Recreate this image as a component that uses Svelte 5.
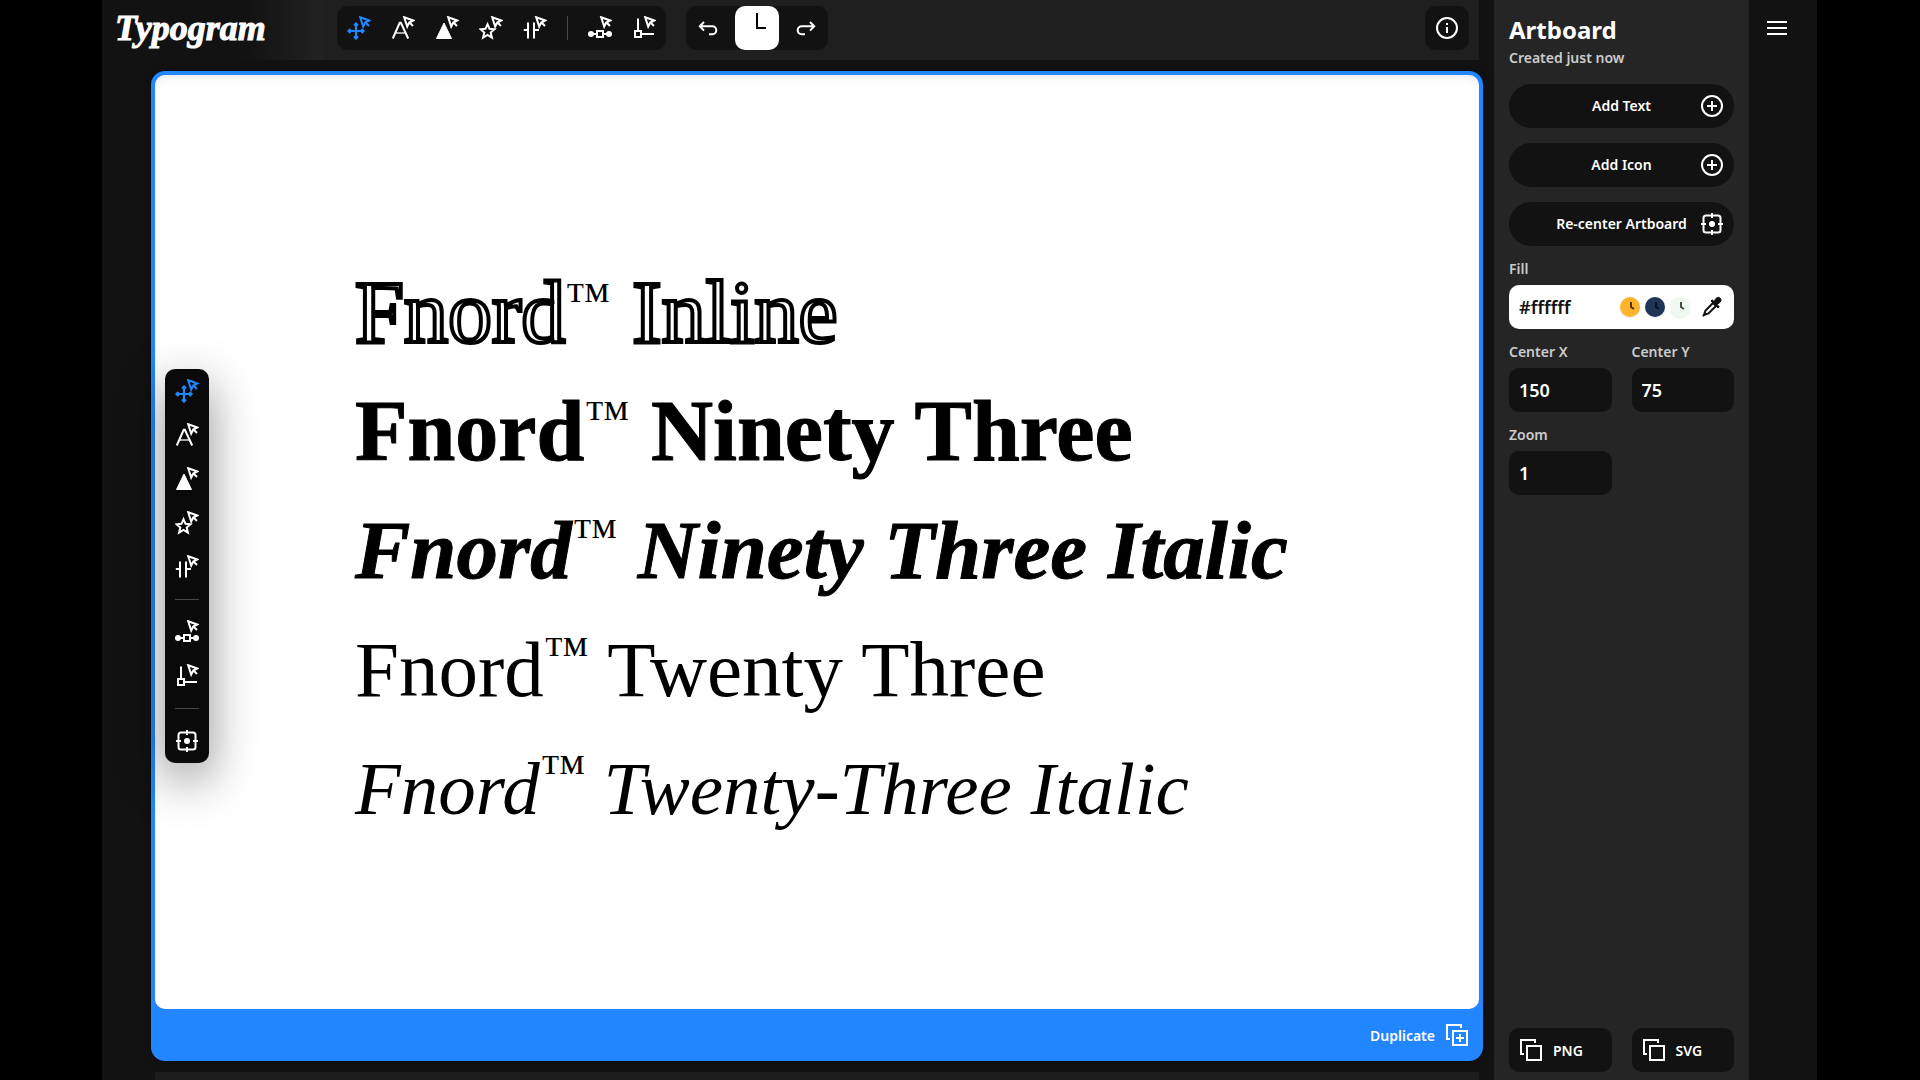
<script>
  const tools = ['move', 'text', 'shape', 'star', 'spacing'];
  const pathTools = ['bezier', 'corner'];
  const titles = {
    move: 'Move',
    text: 'Select text',
    shape: 'Select shape',
    star: 'Select icon',
    spacing: 'Letter spacing',
    bezier: 'Edit path',
    corner: 'Edit corners'
  };

  const lines = [
    { name: 'Inline', style: 'inline' },
    { name: 'Ninety Three', style: 'heavy' },
    { name: 'Ninety Three Italic', style: 'heavy-italic' },
    { name: 'Twenty Three', style: 'light' },
    { name: 'Twenty-Three Italic', style: 'light-italic' }
  ];

  const swatches = ['#ffb42c', '#1d3557', '#f0f9f0'];

  let active = $state('move');
  let fill = $state('#ffffff');
  let centerX = $state('150');
  let centerY = $state('75');
  let zoom = $state('1');

  function recenter() {
    centerX = '150';
    centerY = '75';
    zoom = '1';
  }
</script>

{#snippet icon(name)}
  <svg class="icon" viewBox="0 0 24 24" width="24" height="24" aria-hidden="true">
    {#if name === 'move'}
      <path d="M9 8v14M2 15h14M7 9.5l2-2 2 2M7 20.500l2 2 2-2M3.500 13l-2 2 2 2M14.500 13l2 2-2 2" stroke-width="2.200" />
    {:else if name === 'text'}
      <path d="M1.800 22.500 8.700 6.800h1.200l7.300 15.700" stroke-width="2" />
      <path d="M4.500 17h10" stroke-width="1.600" opacity="0.8" />
    {:else if name === 'shape'}
      <path d="M9 7 16.500 22.500H1.500z" class="solid" stroke-width="1" />
    {:else if name === 'star'}
      <path d="M8.500 8.200l2 4.600 5 .5-3.800 3.300 1.200 5-4.400-2.700-4.400 2.700 1.200-5-3.800-3.300 5-.5z" stroke-width="2" />
    {:else if name === 'spacing'}
      <path d="M5 6.500v16M11 6.500v16M.8 14h4M11.500 14H16" />
    {:else if name === 'bezier'}
      <circle cx="3" cy="18" r="3" class="solid" stroke="none" />
      <circle cx="21" cy="18" r="3" class="solid" stroke="none" />
      <path d="M4 18h5M15 18h5M9 15h6v6H9z" />
    {:else if name === 'corner'}
      <path d="M3 15h6v6H3zM6 2.500V15M9.500 18H22" />
    {:else if name === 'undo'}
      <path d="M8 6 3.800 10.300 8 14.600M4 10.300h12.300a4 4 0 0 1 0 8H13" />
    {:else if name === 'redo'}
      <path d="M16 6l4.200 4.300L16 14.600M20 10.300H7.700a4 4 0 0 0 0 8H11" />
    {:else if name === 'info'}
      <circle cx="12" cy="12" r="10" />
      <path d="M12 11v6M12 7v2" />
    {:else if name === 'plus'}
      <circle cx="12" cy="12" r="10" />
      <path d="M12 7v10M7 12h10" />
    {:else if name === 'target'}
      <rect x="3.500" y="3.500" width="17" height="17" rx="2.500" />
      <path d="M12 1v5M12 18v5M1 12h5M18 12h5" />
      <circle cx="12" cy="12" r="3" class="solid" stroke="none" />
    {:else if name === 'menu'}
      <path d="M2 6h20M2 12h20M2 18h20" />
    {:else if name === 'copy' || name === 'duplicate'}
      <path d="M5 16H2V2h14v3M8 8h14v14H8z" />
      {#if name === 'duplicate'}
        <path d="M15 11v8M11 15h8" />
      {/if}
    {:else if name === 'pipette'}
      <path d="M4 20l1.500-4.500 7.500-7.500 3 3-7.500 7.500L4 20z" />
      <path d="M3 21l2-2" />
      <path d="M11 6l7 7 1.200-1.200-2.200-2.300 3.200-2.300a2.600 2.600 0 0 0-4-4L14 6.500l-1.700-1.700z" class="solid" stroke-width="1" />
    {/if}
    {#if name in titles}
      <path d="M13.200 1.300l9 3.200-4 2-2 4zM18.500 6.500l3.500 3.500" />
    {/if}
  </svg>
{/snippet}

{#snippet toolButtons(names)}
  {#each names as name}
    <button class="tool" class:active={active === name} aria-label={titles[name]} onclick={() => (active = name)}>
      {@render icon(name)}
    </button>
  {/each}
{/snippet}

<div class="app">
  <main class="workspace">
    <header class="topbar">
      <a class="logo" href="#home">Typogram</a>
      <div class="group">
        {@render toolButtons(tools)}
        <span class="divider"></span>
        {@render toolButtons(pathTools)}
      </div>
      <div class="group history">
        <button class="tool" aria-label="Undo">{@render icon('undo')}</button>
        <button class="tool clock" aria-label="History">
          <svg viewBox="0 0 44 44" width="44" height="44" aria-hidden="true">
            <path d="M22 7v15h9" />
          </svg>
        </button>
        <button class="tool" aria-label="Redo">{@render icon('redo')}</button>
      </div>
      <div class="group info">
        <button class="tool" aria-label="Info">{@render icon('info')}</button>
      </div>
    </header>

    <div class="stage">
      <section class="artboard">
        <div class="canvas">
          {#each lines as line}
            <p class="line {line.style}">Fnord<span class="tm">™</span> {line.name}</p>
          {/each}
        </div>
        <footer class="artboard-bar">
          <button class="duplicate">Duplicate {@render icon('duplicate')}</button>
        </footer>
        <div class="floating">
          {@render toolButtons(tools)}
          <span class="divider"></span>
          {@render toolButtons(pathTools)}
          <span class="divider"></span>
          <button class="tool" aria-label="Re-center" onclick={recenter}>{@render icon('target')}</button>
        </div>
      </section>
      <div class="next-board"></div>
    </div>
  </main>

  <aside class="panel">
    <h1>Artboard</h1>
    <p class="created">Created just now</p>

    <div class="actions">
      <button class="pill"><span>Add Text</span>{@render icon('plus')}</button>
      <button class="pill"><span>Add Icon</span>{@render icon('plus')}</button>
      <button class="pill" onclick={recenter}><span>Re-center Artboard</span>{@render icon('target')}</button>
    </div>

    <div class="fields">
      <div class="field wide">
        <label for="fill">Fill</label>
        <div class="fill-box">
          <input id="fill" type="text" bind:value={fill} />
          <div class="swatches">
            {#each swatches as color}
              <button class="swatch" style="background: {color}" aria-label={color} onclick={() => (fill = color)}>
                <svg viewBox="0 0 20 20" width="20" height="20" aria-hidden="true">
                  <path d="M11 5v5l3 2" />
                </svg>
              </button>
            {/each}
          </div>
          <button class="pick" aria-label="Pick color">{@render icon('pipette')}</button>
        </div>
      </div>
      <div class="field">
        <label for="center-x">Center X</label>
        <input id="center-x" type="text" bind:value={centerX} />
      </div>
      <div class="field">
        <label for="center-y">Center Y</label>
        <input id="center-y" type="text" bind:value={centerY} />
      </div>
      <div class="field">
        <label for="zoom">Zoom</label>
        <input id="zoom" type="text" bind:value={zoom} />
      </div>
    </div>

    <div class="exports">
      <button>{@render icon('copy')} PNG</button>
      <button>{@render icon('copy')} SVG</button>
    </div>
  </aside>

  <nav class="rail">
    <button class="tool" aria-label="Menu">{@render icon('menu')}</button>
  </nav>
</div>

<style>
  :global(body) {
    background: #000;
  }

  .app {
    display: flex;
    height: 100vh;
    margin: 0 103px 0 102px;
    background: #121212;
    color: #fff;
    font-family: "Noto Sans", "Open Sans", sans-serif;
    font-size: 14px;
    font-weight: 600;
    overflow: hidden;
  }

  button {
    padding: 0;
    border: 0;
    background: none;
    color: inherit;
    font: inherit;
    cursor: pointer;
  }

  svg {
    display: block;
    fill: none;
    stroke: currentColor;
    stroke-width: 2;
  }

  .solid {
    fill: currentColor;
  }

  /* workspace */
  .workspace {
    display: flex;
    flex: 1;
    flex-direction: column;
    min-width: 0;
  }

  .topbar {
    display: flex;
    flex: none;
    align-items: center;
    height: 60px;
    box-sizing: border-box;
    margin-right: 15px;
    padding: 0 10px 4px 13px;
    background: linear-gradient(to right, #121212 145px, #222 220px, #1f1f1f 222px);
  }

  .logo {
    width: 222px;
    color: #fff;
    font-family: "Liberation Serif", serif;
    font-size: 36px;
    font-style: italic;
    font-weight: 700;
    line-height: 44px;
    text-decoration: none;
    -webkit-text-stroke: 1px #fff;
  }

  .group {
    display: flex;
    border-radius: 10px;
    background: #121212;
  }

  .history {
    gap: 5px;
    margin-left: 20px;
  }

  .info {
    margin-left: auto;
  }

  .tool {
    display: grid;
    place-items: center;
    width: 44px;
    height: 44px;
  }

  .active {
    color: #2186ff;
  }

  .clock {
    border-radius: 10px;
    background: #fff;
    color: #000;
  }

  .divider {
    width: 1px;
    height: 24px;
    margin: 10px;
    background: #484848;
  }

  .stage {
    display: flex;
    flex: 1;
    flex-direction: column;
    gap: 11px;
    min-height: 0;
    padding: 11px 11px 0 49px;
  }

  .artboard {
    position: relative;
    display: flex;
    flex: 1;
    flex-direction: column;
    border: 4px solid #2186ff;
    border-radius: 14px;
    background: #2186ff;
    box-shadow: 0 0 10px rgba(0, 0, 0, 0.3);
  }

  .canvas {
    display: flex;
    flex: 1;
    flex-direction: column;
    justify-content: center;
    padding: 16px 0 0 200px;
    border-radius: 10px;
    background: #fff;
    color: #000;
    box-shadow: inset 0 6px 12px -6px #ddd;
  }

  .line {
    margin: 0;
    font-family: "Liberation Serif", serif;
    font-weight: 400;
    line-height: 119px;
    white-space: nowrap;
  }

  .inline {
    color: #fff;
    font-size: 88px;
    -webkit-text-stroke: 4px #000;
  }

  .heavy {
    font-size: 86px;
    font-weight: 700;
    -webkit-text-stroke: 1px #000;
  }

  .heavy-italic {
    font-size: 83px;
    font-style: italic;
    font-weight: 700;
    -webkit-text-stroke: 1px #000;
  }

  .light {
    font-size: 79px;
  }

  .light-italic {
    font-size: 75px;
    font-style: italic;
  }

  .tm {
    color: #000;
    font-size: 46px;
    font-weight: 400;
    line-height: 1px;
    vertical-align: 28px;
    -webkit-text-stroke: 0;
  }

  .artboard-bar {
    display: flex;
    justify-content: flex-end;
    align-items: center;
    height: 48px;
    padding: 4px 10px 0;
    box-sizing: border-box;
  }

  .duplicate {
    display: flex;
    align-items: center;
    gap: 10px;
  }

  .floating {
    position: absolute;
    top: 50%;
    left: 10px;
    transform: translateY(-50%);
    border-radius: 10px;
    background: #0a0a0a;
    box-shadow: 0 16px 48px rgba(0, 0, 0, 0.45);
  }

  .floating .divider {
    display: block;
    width: 24px;
    height: 1px;
  }

  .next-board {
    height: 8px;
    margin: 0 4px;
    background: #1d1d1d;
  }

  /* side panel */
  .panel {
    display: flex;
    flex-direction: column;
    width: 255px;
    box-sizing: border-box;
    padding: 12px 15px 8px;
    background: #252525;
  }

  h1 {
    margin: 0;
    font-size: 24px;
    font-weight: 700;
    line-height: 36px;
  }

  .created {
    margin: 0 0 16px;
    color: #ccc;
    line-height: 20px;
  }

  .actions {
    display: grid;
    gap: 15px;
  }

  .pill {
    display: grid;
    grid-template-columns: 24px 1fr 24px;
    align-items: center;
    height: 44px;
    padding: 0 10px;
    border-radius: 22px;
    background: #121212;
    white-space: nowrap;
  }

  .pill span {
    grid-column: 2;
    padding-bottom: 2px;
  }

  .fields {
    display: grid;
    grid-template-columns: 1fr 1fr;
    gap: 13px 20px;
    margin-top: 13px;
  }

  .wide {
    grid-column: 1 / -1;
  }

  label {
    display: block;
    margin-bottom: 6px;
    color: #ccc;
    line-height: 20px;
  }

  input {
    display: block;
    width: 100%;
    height: 44px;
    box-sizing: border-box;
    padding: 0 10px;
    border: 0;
    border-radius: 10px;
    background: #121212;
    color: #fff;
    font: inherit;
    font-size: 18px;
    outline: none;
  }

  .fill-box {
    display: flex;
    align-items: center;
    padding-right: 10px;
    border-radius: 10px;
    background: #fff;
  }

  .fill-box input {
    flex: 1;
    min-width: 0;
    background: none;
    color: #121212;
  }

  .swatches {
    display: flex;
    gap: 5px;
    margin-right: 10px;
  }

  .swatch {
    width: 20px;
    height: 20px;
    border-radius: 50%;
    color: rgba(0, 0, 0, 0.7);
    box-shadow: 0 1px 2px rgba(0, 0, 0, 0.1);
  }

  .pick {
    color: #121212;
  }

  .exports {
    display: grid;
    grid-template-columns: 1fr 1fr;
    gap: 20px;
    margin-top: auto;
  }

  .exports button {
    display: flex;
    align-items: center;
    gap: 10px;
    height: 44px;
    padding: 0 10px;
    border-radius: 10px;
    background: #121212;
  }

  .rail {
    width: 68px;
    box-sizing: border-box;
    padding: 6px;
  }
</style>
